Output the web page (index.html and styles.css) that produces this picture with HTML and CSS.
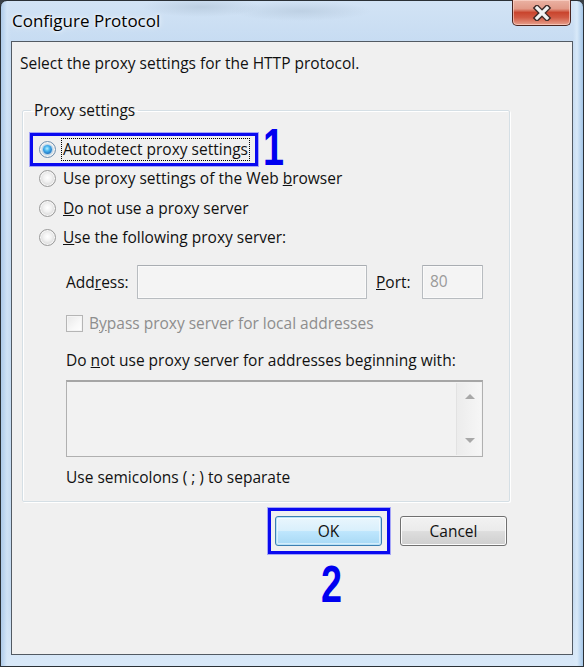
FILE: index.html
```html
<!DOCTYPE html>
<html>
<head>
<meta charset="utf-8">
<title>Configure Protocol</title>
<link rel="stylesheet" href="styles.css">
</head>
<body>
<div class="window">
  <div class="titlebar">
    <span class="title">Configure Protocol</span>
    <button class="close" aria-label="Close">
      <svg width="22" height="16" viewBox="0 0 22 16">
        <path d="M6 3 L16 13 M16 3 L6 13" stroke="#3b2a28" stroke-width="6" stroke-linecap="square" fill="none"/>
        <path d="M6 3 L16 13 M16 3 L6 13" stroke="#f2f2f2" stroke-width="3.2" stroke-linecap="square" fill="none"/>
      </svg>
    </button>
  </div>
  <div class="panel">
    <p class="intro">Select the proxy settings for the HTTP protocol.</p>
    <fieldset class="group">
      <legend>Proxy settings</legend>
      <div class="group-body">
        <div class="option marked">
          <span class="radio checked"></span>
          <span class="label focused">Autodetect proxy settings</span>
          <span class="mark-box box1"></span>
          <span class="num num1">1</span>
        </div>
        <div class="option">
          <span class="radio"></span>
          <span class="label">Use proxy settings of the Web <u>b</u>rowser</span>
        </div>
        <div class="option">
          <span class="radio"></span>
          <span class="label"><u>D</u>o not use a proxy server</span>
        </div>
        <div class="option">
          <span class="radio"></span>
          <span class="label"><u>U</u>se the following proxy server:</span>
        </div>
        <div class="details">
          <div class="addr-row">
            <span class="addr-label">Add<u>r</u>ess:</span>
            <span class="input addr-input"></span>
            <span class="port-label"><u>P</u>ort:</span>
            <span class="input port-input">80</span>
          </div>
          <div class="check-row">
            <span class="checkbox"></span>
            <span class="disabled">B<u>y</u>pass proxy server for local addresses</span>
          </div>
          <p class="text exc-label">Do <u>n</u>ot use proxy server for addresses beginning with:</p>
          <div class="textarea">
            <div class="scroll">
              <span class="arrow up"></span>
              <span class="arrow down"></span>
            </div>
          </div>
          <p class="text hint">Use semicolons ( ; ) to separate</p>
        </div>
      </div>
    </fieldset>
    <div class="buttons">
      <div class="btn-wrap">
        <button class="btn ok">OK</button>
        <span class="mark-box box2"></span>
        <span class="num num2">2</span>
      </div>
      <button class="btn cancel">Cancel</button>
    </div>
  </div>
</div>
</body>
</html>
```
FILE: styles.css
```css
html, body {
  margin: 0;
  padding: 0;
  background: #3a4047;
}
body {
  width: 584px;
  height: 667px;
  overflow: hidden;
  font-family: "Open Sans", "Noto Sans", sans-serif;
  font-size: 15.5px;
  color: #111;
}
.window {
  box-sizing: border-box;
  width: 584px;
  height: 667px;
  border: 1px solid #2a3036;
  border-radius: 7px 7px 0 0;
  background:
    linear-gradient(90deg, rgba(170,200,232,0.9) 0, rgba(214,231,248,0.6) 6px, rgba(214,231,248,0) 10px, rgba(214,231,248,0) 572px, rgba(220,236,250,0.8) 576px, rgba(160,195,230,0.9) 582px),
    linear-gradient(180deg, #d2e3f5 0, #c7dcf2 40px, #c3d9f0 600px, #d8e8f8 660px);
  display: flex;
  flex-direction: column;
  padding: 0 10px 11px 10px;
}
.titlebar {
  height: 40px;
  display: flex;
  align-items: flex-start;
  justify-content: space-between;
  background: radial-gradient(ellipse 60px 10px at 200px 6px, rgba(150,170,190,0.35), rgba(150,170,190,0)),
              radial-gradient(ellipse 70px 10px at 300px 10px, rgba(150,170,190,0.3), rgba(150,170,190,0));
  margin: 0 -10px;
  padding: 0 1px 0 11px;
}
.title {
  font-size: 17px;
  line-height: 20px;
  margin-top: 10px;
  color: #000;
  text-shadow: 0 0 6px rgba(255,255,255,0.9), 0 0 3px rgba(255,255,255,0.9);
}
.close {
  width: 59px;
  height: 26px;
  margin: -1px 11px 0 0;
  padding: 0;
  border: 1px solid #4a2520;
  border-top: none;
  border-radius: 0 0 5px 5px;
  background: linear-gradient(180deg, #eab2a3 0, #e29a88 35%, #c9452e 50%, #d15a44 70%, #e7a08c 100%);
  box-shadow: inset 0 0 0 1px rgba(255,220,210,0.6);
  display: flex;
  align-items: center;
  justify-content: center;
}
.panel {
  flex: 1;
  border: 1px solid #525a63;
  background: #f0f0f0;
  display: flex;
  flex-direction: column;
}
.intro {
  margin: 11px 0 0 8px;
  line-height: 20px;
}
.group {
  margin: 27px 0 0 10px;
  width: 488px;
  box-sizing: border-box;
  padding: 0;
  border: 1px solid #d5dfe5;
  box-shadow: inset 1px 1px 0 #ffffff, 1px 1px 0 #ffffff;
  border-radius: 2px;
}
.group legend {
  margin-left: 8px;
  padding: 0 3px;
  line-height: 20px;
}
.group-body {
  padding: 15px 0 14px 16px;
}
.option {
  position: relative;
  height: 29.3px;
  display: flex;
  align-items: center;
  gap: 5px;
}
.radio {
  position: relative;
  width: 17px;
  height: 17px;
  box-sizing: border-box;
  border-radius: 50%;
  border: 1px solid #9a9a9a;
  background: radial-gradient(circle at 50% 45%, #ffffff 0, #f2f2f2 35%, #d6d6d6 75%, #c4c4c4 100%);
  box-shadow: inset 0 0 0 1px #f8f8f8;
  flex: none;
}
.radio.checked {
  border-color: #6e8fae;
}
.radio.checked::after {
  content: "";
  position: absolute;
  left: 3px;
  top: 3px;
  width: 9px;
  height: 9px;
  border-radius: 50%;
  background: radial-gradient(circle at 45% 40%, #b8f0ff 0, #48b4ee 35%, #1a6fc0 75%, #0f4a8a 100%);
  box-shadow: 0 0 1px 1px rgba(120,190,240,0.6);
}
.label {
  border: 1px dotted transparent;
  padding: 0 1px;
  line-height: 21px;
}
.label.focused {
  border-color: #000;
}
.mark-box {
  position: absolute;
  border: 3px solid #0a0af0;
  box-shadow: 0 0 0 1px rgba(90,90,255,0.5);
  pointer-events: none;
}
.box1 {
  left: -9px;
  top: -2.5px;
  width: 222px;
  height: 27px;
}
.num {
  position: absolute;
  font-family: "Liberation Sans", "DejaVu Sans", sans-serif;
  font-weight: bold;
  color: #0000f0;
  font-size: 51px;
  line-height: 36px;
  transform: scaleX(0.74);
  transform-origin: 0 0;
}
.num1 {
  left: 224px;
  top: -5px;
}
.details {
  margin-left: 27px;
}
.addr-row {
  margin-top: 13px;
  display: flex;
  align-items: center;
  height: 34px;
}
.addr-label {
  width: 71px;
}
.input {
  box-sizing: border-box;
  height: 34px;
  border: 1px solid #b8bcc0;
  border-top-color: #a9adb2;
  background: #f4f4f4;
  box-shadow: inset 0 0 0 1px #fafafa;
  border-radius: 1px;
}
.addr-input {
  width: 230px;
}
.port-label {
  margin-left: 9px;
  width: 46px;
}
.port-input {
  width: 61px;
  color: #9a9a9a;
  padding-left: 7px;
  line-height: 30px;
}
.check-row {
  margin-top: 12px;
  height: 24px;
  display: flex;
  align-items: center;
  gap: 6px;
}
.checkbox {
  width: 17px;
  height: 17px;
  box-sizing: border-box;
  border: 1px solid #b5b5b5;
  background: linear-gradient(135deg, #e8e8e8 0, #f8f8f8 60%, #ffffff 100%);
  box-shadow: inset 0 0 0 1px #f4f4f4;
}
.disabled {
  color: #8d8d8d;
}
.text {
  margin: 0;
  line-height: 20px;
}
.exc-label {
  margin-top: 15px;
}
.textarea {
  margin-top: 10px;
  box-sizing: border-box;
  width: 417px;
  height: 77px;
  border: 1px solid #b0b0b0;
  border-top: 2px solid #a6a6a6;
  background: #f2f2f2;
  display: flex;
  justify-content: flex-end;
  padding: 1px;
}
.scroll {
  width: 24px;
  border-left: 1px solid #e2e2e2;
  background: linear-gradient(90deg, #ececec, #f6f6f6);
  position: relative;
}
.arrow {
  position: absolute;
  left: 8px;
  width: 0;
  height: 0;
  border-left: 5px solid transparent;
  border-right: 5px solid transparent;
}
.arrow.up {
  top: 11px;
  border-bottom: 5px solid #a8a8a8;
}
.arrow.down {
  bottom: 12px;
  border-top: 5px solid #a8a8a8;
}
.hint {
  margin-top: 10px;
}
.buttons {
  margin-top: 14px;
  padding-left: 263px;
  display: flex;
  gap: 18px;
}
.btn-wrap {
  position: relative;
}
.btn {
  width: 107px;
  height: 30px;
  box-sizing: border-box;
  font-family: inherit;
  font-size: 15.5px;
  color: #111;
  border-radius: 3px;
  padding: 0;
}
.ok {
  border: 1px solid #3c7fb1;
  background: linear-gradient(180deg, #eaf6fd 0, #d9f0fc 48%, #bee6fd 52%, #a7d9f5 100%);
  box-shadow: inset 0 0 0 1px #b8e2f8, inset 0 0 0 2px rgba(255,255,255,0.5);
}
.cancel {
  border: 1px solid #707070;
  background: linear-gradient(180deg, #f2f2f2 0, #ebebeb 48%, #dddddd 52%, #cfcfcf 100%);
  box-shadow: inset 0 0 0 1px #fcfcfc;
}
.box2 {
  left: -7px;
  top: -8px;
  width: 116px;
  height: 40px;
}
.num2 {
  left: 46px;
  top: 51px;
}
```
